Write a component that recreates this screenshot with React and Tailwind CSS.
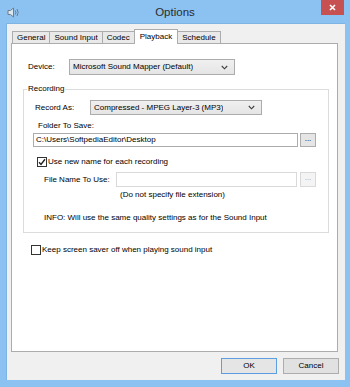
import React from "react";

// little dropdown chevron used by the combo boxes
const Chevron = () => (
  <svg width="7" height="5" viewBox="0 0 7 5" className="shrink-0">
    <path d="M0.8 1 L3.5 3.8 L6.2 1" fill="none" stroke="#3c3c3c" strokeWidth="1.1" />
  </svg>
);

const Combo = ({ value, className }) => (
  <div
    className={
      "flex items-center justify-between border border-[#acacac] bg-gradient-to-b from-[#f0f0f0] to-[#e5e5e5] pl-[3px] pr-[6px] " +
      className
    }
  >
    <span className="truncate">{value}</span>
    <Chevron />
  </div>
);

const Check = ({ checked }) => (
  <div className="flex h-[10px] w-[10px] shrink-0 items-center justify-center border border-[#333] bg-white">
    {checked && (
      <svg width="8" height="8" viewBox="0 0 8 8">
        <path d="M1 4.2 L3 6.4 L7 1.2" fill="none" stroke="#222" strokeWidth="1.4" />
      </svg>
    )}
  </div>
);

const tabs = ["General", "Sound Input", "Codec", "Playback", "Schedule"];

export default function App() {
  return (
    <div className="flex h-[387px] w-[350px] flex-col bg-[#8cc2f2] font-['Liberation_Sans',Arial,sans-serif] text-[8px] leading-[10px] text-black">
      {/* title bar */}
      <div className="flex h-[23px] shrink-0 items-start">
        <div className="ml-[7px] mt-[7px] w-[22px] shrink-0">
          <svg width="13" height="11" viewBox="0 0 13 11" className="block">
            <path d="M1 3.5 H3.5 L6.5 1 V10 L3.5 7.5 H1 Z" fill="#dfe7ee" stroke="#6f7c88" strokeWidth="1" />
            <path d="M8.3 3.5 Q9.6 5.5 8.3 7.5" fill="none" stroke="#6f7c88" strokeWidth="1" />
            <path d="M10 2 Q12.4 5.5 10 9" fill="none" stroke="#6f7c88" strokeWidth="1" />
          </svg>
        </div>
        <div className="flex-1 pt-[5px] text-center text-[11.5px] leading-[14px] text-[#2b2b2b]">Options</div>
        <div className="mr-[6px] flex h-[15px] w-[23px] items-center justify-center bg-[#c75050]">
          <svg width="7" height="7" viewBox="0 0 7 7">
            <path d="M1 1 L6 6 M6 1 L1 6" stroke="#fff" strokeWidth="1.6" />
          </svg>
        </div>
      </div>

      {/* client area */}
      <div className="mb-[7px] ml-[6px] mr-[5px] flex flex-1 flex-col border-l border-t border-[#7fb3e3] bg-[#f0f0f0] pl-[4px] pr-[7px] pt-[5px]">
        <div className="flex h-[14px] items-end pl-[1px]">
          {tabs.map((t) =>
            t === "Playback" ? (
              <div
                key={t}
                className="relative z-10 -mb-px -ml-px flex h-[15px] items-start border border-b-0 border-[#acacac] bg-white px-[5px] pt-[2px]"
              >
                {t}
              </div>
            ) : (
              <div
                key={t}
                className="-ml-px flex h-[12px] items-center border border-b-0 border-[#acacac] bg-[#e9e9e9] px-[4px] first:ml-0"
              >
                {t}
              </div>
            )
          )}
        </div>

        {/* tab page */}
        <div className="flex flex-1 flex-col border border-[#acacac] bg-white">
          <div className="mt-[15px] flex items-center">
            <span className="ml-[16px] w-[41px]">Device:</span>
            <Combo value="Microsoft Sound Mapper (Default)" className="h-[16px] w-[166px]" />
          </div>

          <fieldset className="ml-[11px] mr-[8px] mt-[9px] border border-[#dcdcdc] pb-[9px]">
            <legend className="ml-[3px] px-[1px]">Recording</legend>

            <div className="mt-[6px] flex items-center">
              <span className="ml-[11px] w-[55px]">Record As:</span>
              <Combo value="Compressed - MPEG Layer-3 (MP3)" className="h-[15px] w-[172px]" />
            </div>

            <div className="ml-[14px] mt-[6px]">Folder To Save:</div>
            <div className="mt-[2px] flex">
              <div className="ml-[9px] flex h-[14px] w-[265px] items-center border border-[#acacac] pl-[2px]">
                C:\Users\SoftpediaEditor\Desktop
              </div>
              <div className="ml-[2px] flex h-[14px] w-[16px] items-center justify-center border border-[#acacac] bg-[#e5e5e5] pb-[3px]">
                ...
              </div>
            </div>

            <div className="mt-[10px] flex items-center">
              <div className="ml-[13px]">
                <Check checked />
              </div>
              <span className="ml-[1px]">Use new name for each recording</span>
            </div>

            <div className="mt-[5px] flex items-center">
              <span className="ml-[20px] w-[72px]">File Name To Use:</span>
              <div className="h-[15px] w-[181px] border border-[#d9d9d9]" />
              <div className="ml-[3px] flex h-[15px] w-[16px] items-center justify-center border border-[#d9d9d9] bg-[#f4f4f4] pb-[3px] text-[#a0a0a0]">
                ...
              </div>
            </div>

            <div className="ml-[96px] mt-[3px]">(Do not specify file extension)</div>
            <div className="ml-[20px] mt-[13px]">INFO: Will use the same quality settings as for the Sound Input</div>
          </fieldset>

          <div className="mt-[12px] flex items-center">
            <div className="ml-[19px]">
              <Check />
            </div>
            <span className="ml-[1px]">Keep screen saver off when playing sound input</span>
          </div>
        </div>

        {/* dialog buttons */}
        <div className="-mr-px mb-[6px] mt-[6px] flex h-[16px] justify-end gap-[6px]">
          <div className="flex w-[56px] items-center justify-center border border-[#5c9fe0] bg-[#e5e5e5]">OK</div>
          <div className="flex w-[56px] items-center justify-center border border-[#adadad] bg-[#e1e1e1]">Cancel</div>
        </div>
      </div>
    </div>
  );
}
